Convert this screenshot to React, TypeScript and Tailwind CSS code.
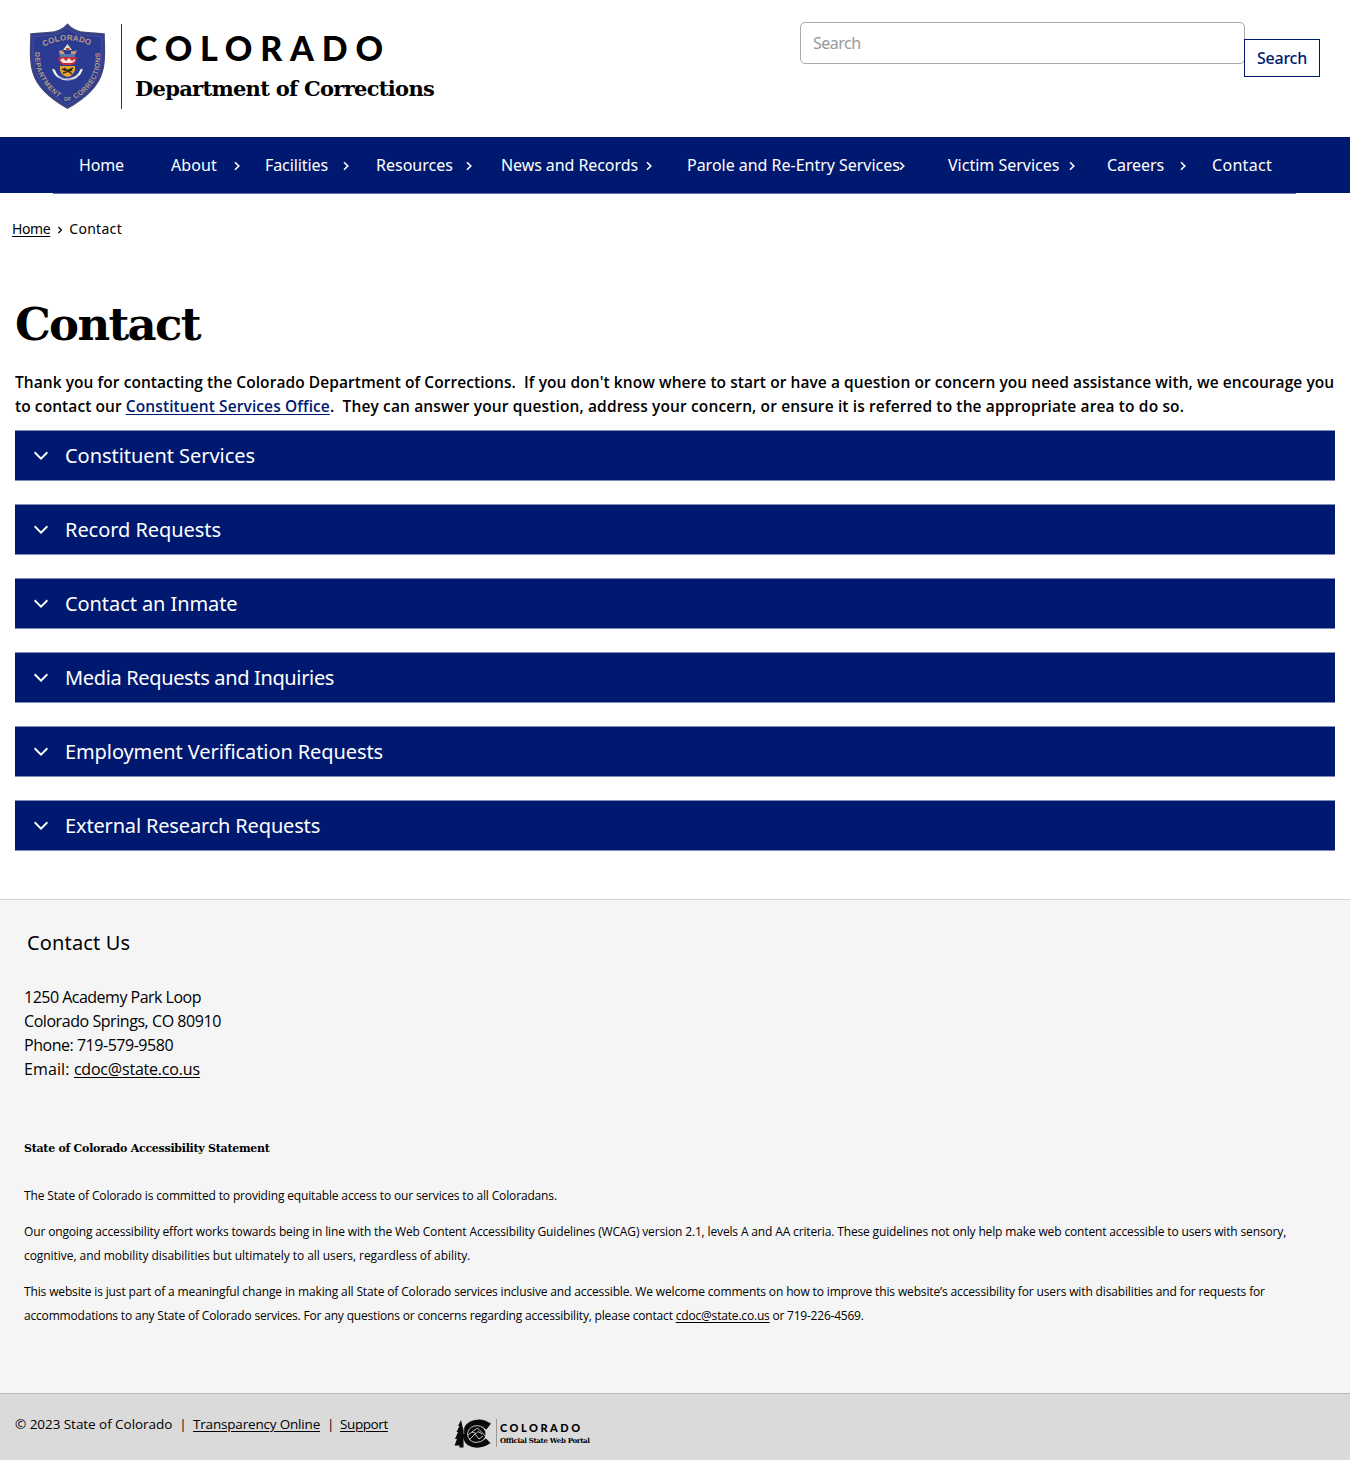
import React from "react";

const navItems = [
  { label: "Home", cell: "w-[92px]", inner: "w-[60px]", spacing: "tracking-[-0.13px]", menu: false },
  { label: "About", cell: "w-[94px]", inner: "w-[69px]", spacing: "tracking-[0.12px]", menu: true },
  { label: "Facilities", cell: "w-[111px]", inner: "w-[84px]", spacing: "tracking-[-0.09px]", menu: true },
  { label: "Resources", cell: "w-[125px]", inner: "w-[96px]", spacing: "tracking-normal", menu: true },
  { label: "News and Records", cell: "w-[186px]", inner: "w-[151px]", spacing: "tracking-[-0.08px]", menu: true },
  { label: "Parole and Re-Entry Services", cell: "w-[261px]", inner: "w-[218px]", spacing: "tracking-[-0.02px]", menu: true },
  { label: "Victim Services", cell: "w-[159px]", inner: "w-[127px]", spacing: "tracking-normal", menu: true },
  { label: "Careers", cell: "w-[105px]", inner: "w-[79px]", spacing: "tracking-[-0.1px]", menu: true },
  { label: "Contact", cell: "w-[84px]", inner: "w-[66px]", spacing: "tracking-[0.3px]", menu: false },
];

const sections = [
  { label: "Constituent Services", spacing: "tracking-[-0.05px]" },
  { label: "Record Requests", spacing: "tracking-[-0.05px]" },
  { label: "Contact an Inmate", spacing: "tracking-[-0.08px]" },
  { label: "Media Requests and Inquiries", spacing: "tracking-[-0.35px]" },
  { label: "Employment Verification Requests", spacing: "tracking-[-0.1px]" },
  { label: "External Research Requests", spacing: "tracking-[-0.16px]" },
];

function Shield() {
  return (
    <svg width="78" height="88" viewBox="28 22 78 88" className="block" aria-label="Department seal">
      <path
        d="M67.500 24.500 C71 29 79 32.500 85 32.500 C93 33 99 33.500 104 34 C104 45 106 60 102 72 C97 90 80 101 67.500 108 C55 101 38 90 33 72 C29 60 31 45 31 34 C36 33.500 42 33 50 32.500 C56 32.500 64 29 67.500 24.500Z"
        fill="#2c3b92" stroke="#42477a" strokeWidth="1.600"
      />
      <path
        d="M67.500 28 C72 32 79 35 85 35.200 L101.500 36.500 C102 48 103 60 99.500 71 C95 87 79 98 67.500 105 C56 98 40 87 35.500 71 C32 60 33 48 33.500 36.500 L50 35.200 C56 35 63 32 67.500 28Z"
        fill="none" stroke="#69698f" strokeWidth=".5"
      />
      <defs>
        <path id="seal-top" d="M44 47 Q67.500 33 95 48" />
        <path id="seal-left" d="M35 52 C34 74 45 90 64 101" />
        <path id="seal-right" d="M75 99 C95 87 102 71 100 49" />
      </defs>
      <g fill="#b49c84" fontFamily="Liberation Sans" fontWeight="700">
        <text fontSize="8"><textPath href="#seal-top" textLength="48">COLORADO</textPath></text>
        <text fontSize="7"><textPath href="#seal-left" textLength="54">DEPARTMENT</textPath></text>
        <text fontSize="5" x="64" y="101">OF</text>
        <text fontSize="7"><textPath href="#seal-right" textLength="56">CORRECTIONS</textPath></text>
      </g>
      <path d="M67.500 44 L72 50 H63Z" fill="#e8dcc0" />
      <path d="M66 48 h3.500 v2.500 H66Z" fill="#9c5545" />
      <path d="M59 51 q3-2 5 1 l1 4 h-5Z M71 51 q3 1 6-1 l-2 5 h-4Z" fill="#c59a74" />
      <path d="M60 54 H75 V57 H60Z" fill="#5478b2" />
      <path d="M58.500 57 H76.500 V60 Q75.500 64 72 65 H63 Q59 63 58.500 60Z" fill="#c62c36" />
      <path d="M60 60 l3-2 3 3 3-3 3 3 3-2 v2 l-3 2 h-9Z" fill="#f4e5e3" />
      <path d="M60 66 H75 V70 Q73 76 67.500 77 Q61 75.500 60 70Z" fill="#e4a42d" />
      <path d="M62 69 l5 2 6-3 M63 73 l9-3 M64 68 l8 6" stroke="#352719" strokeWidth="1.500" fill="none" />
      <path d="M53 69 Q56 79 67.500 79.500 Q78 79 82 69" fill="none" stroke="#d9dae4" strokeWidth="2.200" />
      <path d="M54 70 l3 6 M81 70 l-2 5" stroke="#fff" strokeWidth="1.500" />
      <path d="M60 78 l13 1.500" stroke="#7d83b1" strokeWidth=".8" />
    </svg>
  );
}

function StateLogo() {
  return (
    <svg width="38" height="29" viewBox="454 1419 38 29" className="block" aria-label="State of Colorado">
      <path d="M461 1420 l-3 6 h1.500 l-3 6 h1.500 l-3 7 h2 l-2.500 6.500 h5 v2 h4 V1431Z" fill="#090909" />
      <path d="M491 1423.500 L485 1420.500 Q480 1419 475 1420 Q463 1422.500 462.800 1434 Q463 1446 475 1447.500 Q483 1448.500 490.500 1443 L485.500 1438 Q482 1441.500 477.500 1441 Q471 1440 471 1434 Q471 1428 477.500 1427 Q483 1426.500 486 1430Z" fill="#090909" />
      <circle cx="477" cy="1434" r="8.500" fill="#090909" />
      <path d="M486 1430 Q481 1424.500 474 1426 Q468 1428 467.500 1434.500 Q468.500 1441 475 1442.500 Q481 1443 486 1438" fill="none" stroke="#dadada" strokeWidth=".9" />
      <path d="M468 1435 l4-3 5.500-4 4.500 4.500 3.500 4 M472 1432 l4 1.500 2-2 4 2.500 M469 1440 l6-6 4 5 4-3" fill="none" stroke="#dadada" strokeWidth=".9" />
      <path d="M463.800 1424 V1434" stroke="#dadada" strokeWidth=".6" />
    </svg>
  );
}

function Chevron({ className }: { className: string }) {
  return (
    <svg width="6" height="10" viewBox="0 0 6 10" className={className} aria-hidden="true">
      <path d="M1 1.200 L4.800 5 L1 8.800" fill="none" stroke="currentColor" strokeWidth="1.600" />
    </svg>
  );
}

export default function App() {
  return (
    <div className="min-h-[1461px] bg-white font-['Open_Sans',sans-serif] text-base leading-6 text-black">
      <header className="flex h-[137px] items-start justify-between">
        <div className="flex pt-[22px] pl-7">
          <Shield />
          <div className="mt-0.5 ml-[15px] h-[85px] w-px bg-[#333]" />
          <div className="ml-[13px] pt-[9px]">
            <div className="h-[34px] font-['Lato',sans-serif] text-[34px] leading-[34px] font-black tracking-[7.8px] whitespace-nowrap">COLORADO</div>
            <div className="mt-[11px] font-['DejaVu_Serif',serif] text-[21px] leading-[26px] font-bold tracking-[-0.7px] whitespace-nowrap">Department of Corrections</div>
          </div>
        </div>
        <form className="flex pt-[22px] pr-[30px]">
          <input
            className="h-[42px] w-[445px] rounded-[5px] border border-[#aaa] px-3 font-['Noto_Sans',sans-serif] text-base tracking-[-0.5px] placeholder:text-[#999]"
            placeholder="Search"
          />
          <button type="button" className="mt-[17px] -ml-px h-[38px] w-[76px] border border-[#001970] bg-white font-['Noto_Sans',sans-serif] text-base font-medium tracking-[-0.25px] text-[#001970]">
            Search
          </button>
        </form>
      </header>

      <nav className="h-14 bg-[#001970] pl-[79px] font-['Noto_Sans',sans-serif] text-white">
        <ul className="flex h-14 items-center">
          {navItems.map((item) => (
            <li key={item.label} className={item.cell + " shrink-0"}>
              <a className={item.inner + " flex items-center justify-between whitespace-nowrap"}>
                <span className={item.spacing}>{item.label}</span>
                {item.menu && <Chevron className="mt-0.5 -ml-1 shrink-0" />}
              </a>
            </li>
          ))}
        </ul>
      </nav>
      <div className="mr-[54px] ml-[53px] h-px bg-[#6673a8]" />

      <div className="flex h-[73px] items-start pt-[23px] pl-3 font-['Noto_Sans',sans-serif] text-sm leading-6">
        <a className="tracking-[-0.4px] underline underline-offset-2">Home</a>
        <Chevron className="mt-[9px] ml-[7px] h-2" />
        <span className="ml-1.5 tracking-[0.3px]">Contact</span>
      </div>

      <main className="px-[15px]">
        <h1 className="h-[104px] pt-7 font-['DejaVu_Serif',serif] text-[45px] leading-[60px] font-bold tracking-[-1.7px]">Contact</h1>
        <p className="-mt-px h-[60px] text-[15.5px] font-semibold whitespace-nowrap">
          <span className="tracking-[0.065px]">
            Thank you for contacting the Colorado Department of Corrections.&nbsp; If you don't know where to start or have a question or concern you need assistance with, we encourage you
          </span>
          <br />
          <span className="tracking-[0.08px]">to contact our </span>
          <a className="tracking-[0.1px] text-[#001970] underline underline-offset-2">Constituent Services Office</a>
          <span className="tracking-[0.13px]">.&nbsp; They can answer your question, address your concern, or ensure it is referred to the appropriate area to do so.</span>
        </p>
        <div className="flex flex-col gap-[23px] font-['Noto_Sans',sans-serif] text-xl">
          {sections.map((section) => (
            <button type="button" key={section.label} className="flex h-[51px] items-center border-y border-[#7f8bb8] bg-[#001970] pl-[19px] text-left text-white">
              <svg width="14" height="10" viewBox="0 0 14 10" className="mr-[17px]" aria-hidden="true">
                <path d="M.6 1.300 L7 7.600 L13.400 1.300" fill="none" stroke="currentColor" strokeWidth="1.900" />
              </svg>
              <span className={section.spacing}>{section.label}</span>
            </button>
          ))}
        </div>
      </main>

      <footer className="mt-12">
        <section className="h-[494px] border-t border-[#d4d4d4] bg-[#f5f5f5] px-6 pt-[31px] whitespace-nowrap">
          <h2 className="ml-[3px] h-6 font-['Noto_Sans',sans-serif] text-xl leading-6 tracking-[0.15px]">Contact Us</h2>
          <address className="mt-[30px] not-italic">
            <div className="tracking-[-0.51px]">1250 Academy Park Loop</div>
            <div className="tracking-[-0.44px]">Colorado Springs, CO 80910</div>
            <div className="tracking-[-0.47px]">Phone: 719-579-9580</div>
            <div className="tracking-[0.12px]">Email: <a className="tracking-[-0.2px] underline underline-offset-2">cdoc@state.co.us</a></div>
          </address>
          <h3 className="mt-[56px] font-['DejaVu_Serif',serif] text-[11px] leading-6 font-bold tracking-[-0.26px]">State of Colorado Accessibility Statement</h3>
          <div className="mt-[23px] flex flex-col gap-3 text-xs leading-6">
            <p className="tracking-[-0.15px]">The State of Colorado is committed to providing equitable access to our services to all Coloradans.</p>
            <p>
              <span className="tracking-[-0.145px]">Our ongoing accessibility effort works towards being in line with the Web Content Accessibility Guidelines (WCAG) version 2.1, levels A and AA criteria. These guidelines not only help make web content accessible to users with sensory,</span>
              <br />
              <span className="tracking-[-0.055px]">cognitive, and mobility disabilities but ultimately to all users, regardless of ability.</span>
            </p>
            <p>
              <span className="tracking-[-0.14px]">This website is just part of a meaningful change in making all State of Colorado services inclusive and accessible. We welcome comments on how to improve this website’s accessibility for users with disabilities and for requests for</span>
              <br />
              <span className="tracking-[-0.18px]">accommodations to any State of Colorado services. For any questions or concerns regarding accessibility, please contact </span>
              <a className="tracking-[-0.18px] underline underline-offset-2">cdoc@state.co.us</a>
              <span className="tracking-[-0.23px]"> or 719-226-4569.</span>
            </p>
          </div>
        </section>
        <section className="flex h-[67px] items-start border-t border-t-[#b8b8b8] bg-[#dadada] pl-[15px] text-[13.5px] leading-6 whitespace-nowrap">
          <div className="flex w-[439px] pt-[18px]">
            <span className="w-[178px] tracking-[-0.05px]">© 2023 State of Colorado<span className="ml-[7px]">|</span></span>
            <a className="w-[134px] tracking-[-0.18px] underline underline-offset-2">Transparency Online</a>
            <span className="w-[13px]">|</span>
            <a className="tracking-[-0.4px] underline underline-offset-2">Support</a>
          </div>
          <div className="flex pt-[25px]">
            <StateLogo />
            <div className="ml-1 h-[28px] w-px bg-[#999]" />
            <div className="ml-[3px] pt-1">
              <div className="font-['Lato',sans-serif] text-[11px] leading-[10px] font-black tracking-[2.5px]">COLORADO</div>
              <div className="mt-[3px] font-['DejaVu_Serif',serif] text-[7px] leading-[9px] font-bold tracking-[-0.3px]">Official State Web Portal</div>
            </div>
          </div>
        </section>
      </footer>
    </div>
  );
}
